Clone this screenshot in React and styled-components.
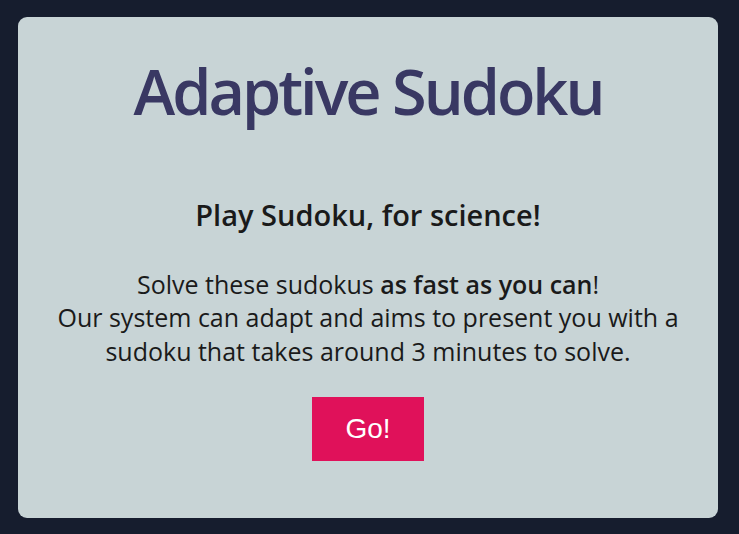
import React from 'react'
import styled, { createGlobalStyle } from 'styled-components'

const GlobalStyle = createGlobalStyle`
  html, body {
    margin: 0;
    padding: 0;
    background-color: #161d2e;
    height: 100%;
  }
  body {
    font-family: 'Open Sans', 'Noto Sans', sans-serif;
  }
`

const StyledPage = styled.div`
  padding: 17px 18px 16px 18px;
  box-sizing: border-box;
  height: 534px;
`

const StyledCard = styled.main`
  width: 700px;
  height: 501px;
  box-sizing: border-box;
  background-color: #c8d4d6;
  border-radius: 9px;
  display: flex;
  flex-direction: column;
  align-items: center;
  text-align: center;
  padding-top: 30px;
`

const StyledTitle = styled.h1`
  margin: 0;
  font-size: 63px;
  font-weight: 600;
  letter-spacing: -3px;
  color: #393863;
  line-height: 87px;
`

const StyledSubtitle = styled.h2`
  margin: 61px 0 0 0;
  font-size: 29px;
  font-weight: 600;
  color: #1a1a1a;
  line-height: 39.5px;
`

const StyledText = styled.p`
  margin: 33px 0 0 0;
  font-size: 25px;
  line-height: 33.5px;
  color: #1a1a1a;

  b {
    font-weight: 600;
  }
`

const StyledButton = styled.button`
  margin-top: 29px;
  width: 112px;
  height: 64px;
  border: none;
  background-color: #e0115a;
  color: #ffffff;
  font-family: 'Liberation Sans', Arial, sans-serif;
  font-size: 28px;
  cursor: pointer;
`

const App = () => (
  <>
    <GlobalStyle />
    <StyledPage>
      <StyledCard>
        <StyledTitle>Adaptive Sudoku</StyledTitle>
        <StyledSubtitle>Play Sudoku, for science!</StyledSubtitle>
        <StyledText>
          Solve these sudokus <b>as fast as you can</b>!
          <br />
          Our system can adapt and aims to present you with a
          <br />
          sudoku that takes around 3 minutes to solve.
        </StyledText>
        <StyledButton>Go!</StyledButton>
      </StyledCard>
    </StyledPage>
  </>
)

export default App
